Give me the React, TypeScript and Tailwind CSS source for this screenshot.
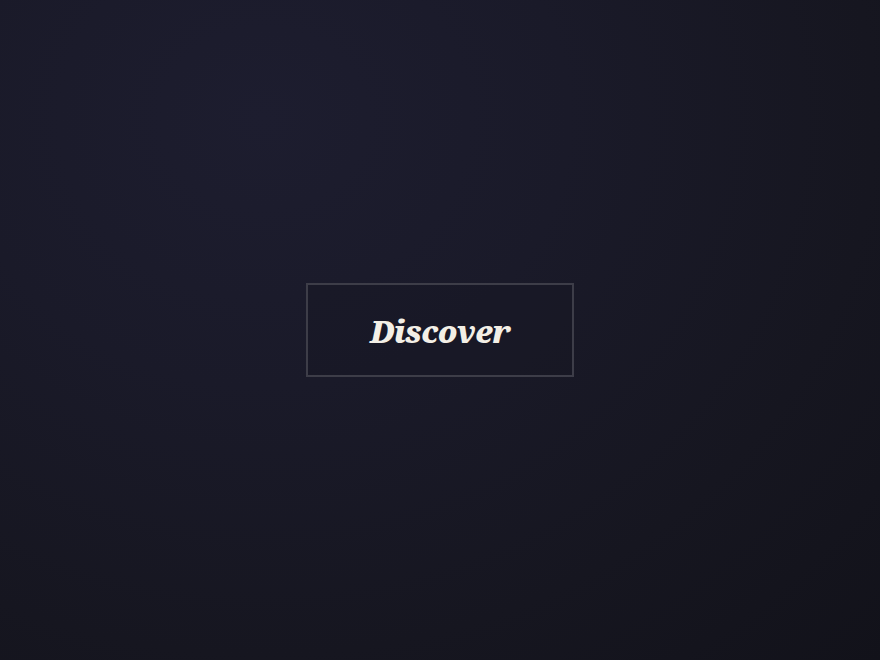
export default function App() {
  return (
    <div className="w-[880px] h-[660px] flex items-center justify-center bg-[radial-gradient(ellipse_at_30%_18%,#1d1d2f_0%,#1a1a29_35%,#161620_70%,#12121a_100%)]">
      <button className="w-[268px] h-[94px] border-2 border-[#3d3d48] bg-[#161622]/40 flex items-center justify-center pt-[2px]">
        <span className="text-[#f3efe6] text-[30.5px] font-black italic leading-none tracking-[-0.6px]" style={{ fontFamily: '"Noto Serif", serif' }}>
          Discover
        </span>
      </button>
    </div>
  );
}
